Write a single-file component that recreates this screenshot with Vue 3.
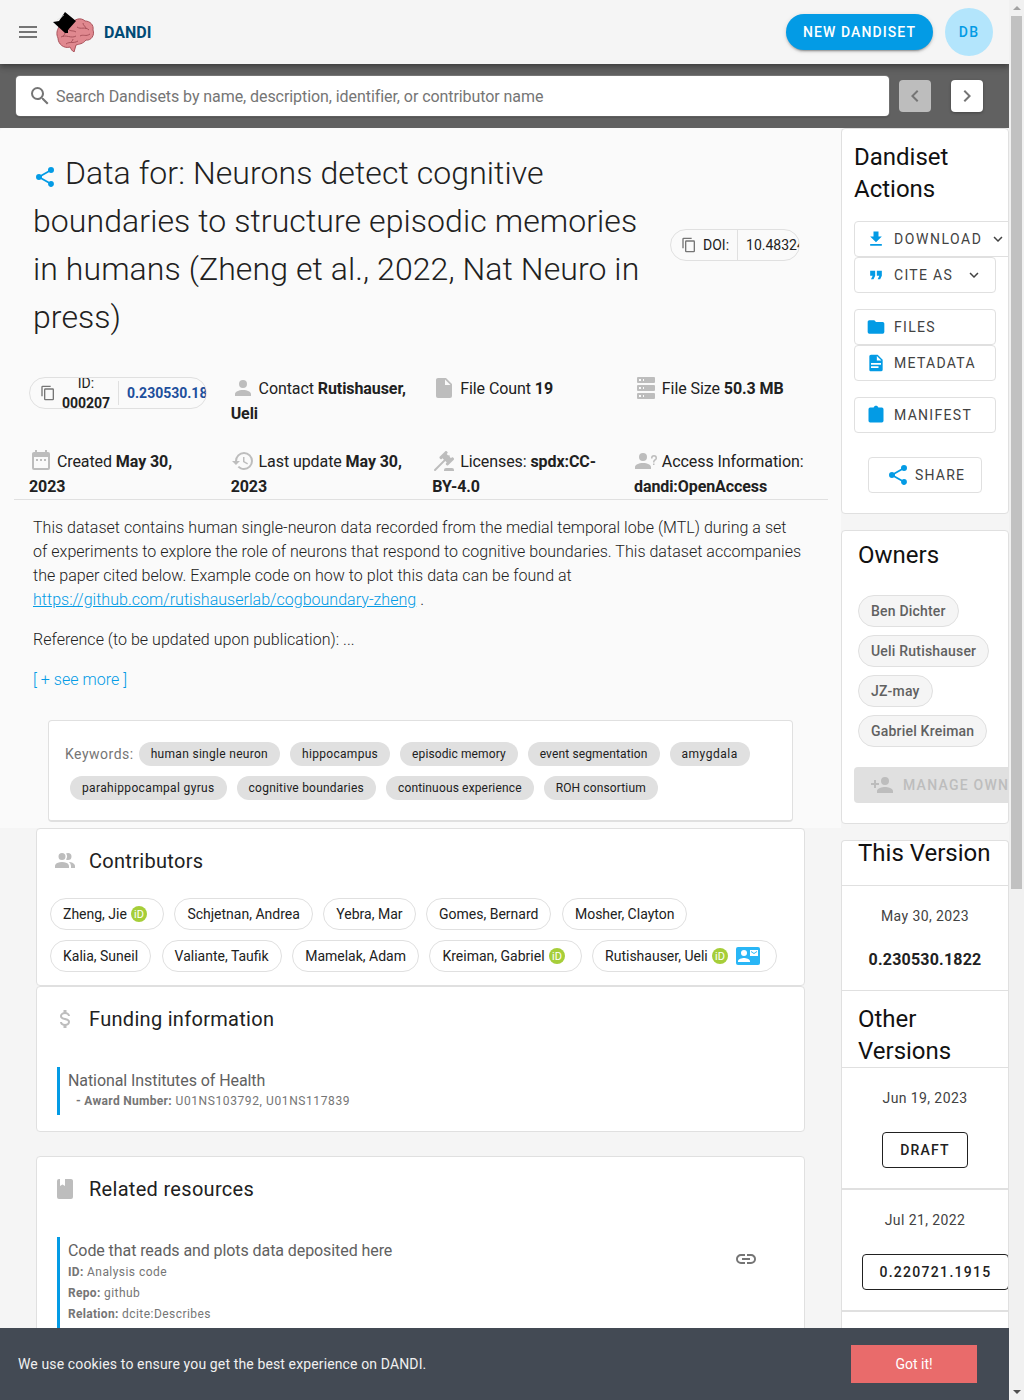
<script setup>
const icons = {
  menu: 'M3,6H21V8H3V6M3,11H21V13H3V11M3,16H21V18H3V16Z',
  magnify: 'M9.5,3A6.5,6.5 0 0,1 16,9.5C16,11.11 15.41,12.59 14.44,13.73L14.71,14H15.5L20.5,19L19,20.5L14,15.5V14.71L13.73,14.44C12.59,15.41 11.11,16 9.5,16A6.5,6.5 0 0,1 3,9.5A6.5,6.5 0 0,1 9.5,3M9.5,5C7,5 5,7 5,9.5C5,12 7,14 9.5,14C12,14 14,12 14,9.5C14,7 12,5 9.5,5Z',
  left: 'M15.41,16.58L10.83,12L15.41,7.41L14,6L8,12L14,18L15.41,16.58Z',
  right: 'M8.59,16.58L13.17,12L8.59,7.41L10,6L16,12L10,18L8.59,16.58Z',
  down: 'M7.41,8.58L12,13.17L16.59,8.58L18,10L12,16L6,10L7.41,8.58Z',
  share: 'M18,16.08C17.24,16.08 16.56,16.38 16.04,16.85L8.91,12.7C8.96,12.47 9,12.24 9,12C9,11.76 8.96,11.53 8.91,11.3L15.96,7.19C16.5,7.69 17.21,8 18,8A3,3 0 0,0 21,5A3,3 0 0,0 18,2A3,3 0 0,0 15,5C15,5.24 15.04,5.47 15.09,5.7L8.04,9.81C7.5,9.31 6.79,9 6,9A3,3 0 0,0 3,12A3,3 0 0,0 6,15C6.79,15 7.5,14.69 8.04,14.19L15.16,18.34C15.11,18.55 15.08,18.77 15.08,19C15.08,20.61 16.39,21.91 18,21.91C19.61,21.91 20.92,20.61 20.92,19A2.92,2.92 0 0,0 18,16.08Z',
  copy: 'M19,21H8V7H19M19,5H8A2,2 0 0,0 6,7V21A2,2 0 0,0 8,23H19A2,2 0 0,0 21,21V7A2,2 0 0,0 19,5M16,1H4A2,2 0 0,0 2,3V17H4V3H16V1Z',
  account: 'M12,4A4,4 0 0,1 16,8A4,4 0 0,1 12,12A4,4 0 0,1 8,8A4,4 0 0,1 12,4M12,14C16.42,14 20,15.79 20,18V20H4V18C4,15.79 7.58,14 12,14Z',
  file: 'M13,9V3.5L18.5,9M6,2C4.89,2 4,2.89 4,4V20A2,2 0 0,0 6,22H18A2,2 0 0,0 20,20V8L14,2H6Z',
  server: 'M4,1H20A1,1 0 0,1 21,2V6A1,1 0 0,1 20,7H4A1,1 0 0,1 3,6V2A1,1 0 0,1 4,1M4,9H20A1,1 0 0,1 21,10V14A1,1 0 0,1 20,15H4A1,1 0 0,1 3,14V10A1,1 0 0,1 4,9M4,17H20A1,1 0 0,1 21,18V22A1,1 0 0,1 20,23H4A1,1 0 0,1 3,22V18A1,1 0 0,1 4,17M9,5H10V3H9V5M9,13H10V11H9V13M9,21H10V19H9V21M5,3V5H7V3H5M5,11V13H7V11H5M5,19V21H7V19H5Z',
  calendar: 'M9,10H7V12H9V10M13,10H11V12H13V10M17,10H15V12H17V10M19,3H18V1H16V3H8V1H6V3H5C3.89,3 3,3.9 3,5V19A2,2 0 0,0 5,21H19A2,2 0 0,0 21,19V5A2,2 0 0,0 19,3M19,19H5V8H19V19Z',
  history: 'M13.5,8H12V13L16.28,15.54L17,14.33L13.5,12.25V8M13,3A9,9 0 0,0 4,12H1L4.96,16.03L9,12H6A7,7 0 0,1 13,5A7,7 0 0,1 20,12A7,7 0 0,1 13,19C11.07,19 9.32,18.21 8.06,16.94L6.64,18.36C8.27,20 10.5,21 13,21A9,9 0 0,0 22,12A9,9 0 0,0 13,3',
  gavel: 'M2.3,20.28L11.9,10.68L10.5,9.26L9.78,9.97C9.39,10.36 8.76,10.36 8.37,9.97L7.66,9.26C7.27,8.87 7.27,8.24 7.66,7.85L13.32,2.19C13.71,1.8 14.34,1.8 14.73,2.19L15.44,2.9C15.83,3.29 15.83,3.92 15.44,4.31L14.73,5L16.15,6.43C16.54,6.04 17.17,6.04 17.56,6.43C17.95,6.82 17.95,7.46 17.56,7.85L18.97,9.26L19.68,8.55C20.07,8.16 20.71,8.16 21.1,8.55L21.8,9.26C22.19,9.65 22.19,10.29 21.8,10.68L16.15,16.33C15.76,16.72 15.12,16.72 14.73,16.33L14.03,15.63C13.63,15.24 13.63,14.6 14.03,14.21L14.73,13.5L13.32,12.09L3.71,21.7C3.32,22.09 2.69,22.09 2.3,21.7C1.91,21.31 1.91,20.67 2.3,20.28M20,19A2,2 0 0,1 22,21V22H12V21A2,2 0 0,1 14,19H20Z',
  accountQ: 'M13,8A4,4 0 0,1 9,12A4,4 0 0,1 5,8A4,4 0 0,1 9,4A4,4 0 0,1 13,8M17,18V20H1V18C1,15.79 4.58,14 9,14C13.42,14 17,15.79 17,18M20.5,14.5V16H19V14.5H20.5M18.5,9.5H17V9A3,3 0 0,1 20,6A3,3 0 0,1 23,9C23,9.97 22.5,10.88 21.71,11.41L21.41,11.6C20.84,12 20.5,12.61 20.5,13.3V13.5H19V13.3C19,12.11 19.6,11 20.59,10.35L20.88,10.16C21.27,9.9 21.5,9.47 21.5,9A1.5,1.5 0 0,0 20,7.5A1.5,1.5 0 0,0 18.5,9V9.5Z',
  download: 'M5,20H19V18H5M19,9H15V3H9V9H5L12,16L19,9Z',
  quote: 'M14,17H17L19,13V7H13V13H16M6,17H9L11,13V7H5V13H8L6,17Z',
  folder: 'M10,4H4C2.89,4 2,4.89 2,6V18A2,2 0 0,0 4,20H20A2,2 0 0,0 22,18V8C22,6.89 21.1,6 20,6H12L10,4Z',
  doc: 'M13,9H18.5L13,3.5V9M6,2H14L20,8V20A2,2 0 0,1 18,22H6C4.89,22 4,21.1 4,20V4C4,2.89 4.89,2 6,2M15,18V16H6V18H15M18,14V12H6V14H18Z',
  clipboard: 'M19,3H14.82C14.4,1.84 13.3,1 12,1C10.7,1 9.6,1.84 9.18,3H5A2,2 0 0,0 3,5V19A2,2 0 0,0 5,21H19A2,2 0 0,0 21,19V5A2,2 0 0,0 19,3Z',
  accountPlus: 'M15,14C12.33,14 7,15.33 7,18V20H23V18C23,15.33 17.67,14 15,14M6,10V7H4V10H1V12H4V15H6V12H9V10M15,12A4,4 0 0,0 19,8A4,4 0 0,0 15,4A4,4 0 0,0 11,8A4,4 0 0,0 15,12Z',
  people: 'M16 17V19H2V17S2 13 9 13 16 17 16 17M12.5 7.5A3.5 3.5 0 1 0 9 11A3.5 3.5 0 0 0 12.5 7.5M15.94 13A5.32 5.32 0 0 1 18 17V19H22V17S22 13.37 15.94 13M15 4A3.39 3.39 0 0 0 13.07 4.59A5 5 0 0 1 13.07 10.41A3.39 3.39 0 0 0 15 11A3.5 3.5 0 0 0 15 4Z',
  dollar: 'M7,15H9C9,16.08 10.37,17 12,17C13.63,17 15,16.08 15,15C15,13.9 13.96,13.5 11.76,12.97C9.64,12.44 7,11.78 7,9C7,7.21 8.47,5.69 10.5,5.18V3H13.5V5.18C15.53,5.69 17,7.21 17,9H15C15,7.92 13.63,7 12,7C10.37,7 9,7.92 9,9C9,10.1 10.04,10.5 12.24,11.03C14.36,11.56 17,12.22 17,15C17,16.79 15.53,18.31 13.5,18.82V21H10.5V18.82C8.47,18.31 7,16.79 7,15Z',
  book: 'M18,22A2,2 0 0,0 20,20V4C20,2.89 19.1,2 18,2H12V9L9.5,7.5L7,9V2H6A2,2 0 0,0 4,4V20A2,2 0 0,0 6,22H18Z',
  link: 'M3.9,12C3.9,10.29 5.29,8.9 7,8.9H11V7H7A5,5 0 0,0 2,12A5,5 0 0,0 7,17H11V15.1H7C5.29,15.1 3.9,13.71 3.9,12M8,13H16V11H8V13M17,7H13V8.9H17C18.71,8.9 20.1,10.29 20.1,12C20.1,13.71 18.71,15.1 17,15.1H13V17H17A5,5 0 0,0 22,12A5,5 0 0,0 17,7Z'
}

const meta = [
  { icon: 'account', label: 'Contact', value: 'Rutishauser, Ueli' },
  { icon: 'file', label: 'File Count', value: '19' },
  { icon: 'server', label: 'File Size', value: '50.3 MB' },
  { icon: 'calendar', label: 'Created', value: 'May 30, 2023' },
  { icon: 'history', label: 'Last update', value: 'May 30, 2023' },
  { icon: 'gavel', label: 'Licenses:', value: 'spdx:CC-BY-4.0' },
  { icon: 'accountQ', label: 'Access Information:', value: 'dandi:OpenAccess' }
]

// tracking per keyword, the chips in the page don't share one even width
const keywords = [
  { text: 'human single neuron', spacing: 0.3 },
  { text: 'hippocampus', spacing: 0.3 },
  { text: 'episodic memory', spacing: 0.1 },
  { text: 'event segmentation', spacing: 0.13 },
  { text: 'amygdala', spacing: 0.5 },
  { text: 'parahippocampal gyrus', spacing: 0.35 },
  { text: 'cognitive boundaries', spacing: 0.22 },
  { text: 'continuous experience', spacing: 0.15 },
  { text: 'ROH consortium', spacing: 0.13 }
]

const contributors = [
  { name: 'Zheng, Jie', orcid: true },
  { name: 'Schjetnan, Andrea' },
  { name: 'Yebra, Mar' },
  { name: 'Gomes, Bernard' },
  { name: 'Mosher, Clayton' },
  { name: 'Kalia, Suneil' },
  { name: 'Valiante, Taufik' },
  { name: 'Mamelak, Adam' },
  { name: 'Kreiman, Gabriel', orcid: true },
  { name: 'Rutishauser, Ueli', orcid: true, contact: true }
]

const owners = ['Ben Dichter', 'Ueli Rutishauser', 'JZ-may', 'Gabriel Kreiman']
</script>

<template>
  <div class="app">
    <div class="page">
      <header class="topbar">
        <svg class="ic menu-ic" viewBox="0 0 24 24"><path :d="icons.menu" /></svg>
        <svg class="logo" viewBox="0 0 42 40">
          <path d="M6 15C8 11 14 14 18 12C21 7 28 5 32 9C37 9 41 13 40 18C42 23 38 29 33 28C30 32 26 32 23 33L21 40C19 39 18 37 17 35C11 37 5 32 5 26C3 22 4 18 6 15Z" fill="#e0888f" stroke="#a9525b" stroke-width="1" />
          <path d="M8 25C13 22 18 27 23 24M13 32C17 29 20 32 25 29M24 15C28 18 32 14 36 18M27 24C30 22 33 25 37 22M15 17C18 20 20 18 23 20M30 11C30 14 33 14 33 17M12 21C12 23 10 23 10 25M20 27C20 29 18 29 18 31" fill="none" stroke="#a9525b" stroke-width="1" />
          <path d="M0 10L6 9L12 0L23 9L15 18L15 21L12 21Z" fill="#000" />
          <path d="M4 8C7 6 9 5 11 3" fill="none" stroke="#ddd" stroke-width="0.6" />
        </svg>
        <span class="brand">DANDI</span>
        <span class="spacer"></span>
        <span class="new-btn">NEW DANDISET</span>
        <span class="avatar">DB</span>
      </header>

      <div class="searchbar">
        <div class="search-input">
          <svg class="ic search-ic" viewBox="0 0 24 24"><path :d="icons.magnify" /></svg>
          <span>Search Dandisets by name, description, identifier, or contributor name</span>
        </div>
        <span class="pager off"><svg class="ic" viewBox="0 0 24 24"><path :d="icons.left" /></svg></span>
        <span class="pager"><svg class="ic" viewBox="0 0 24 24"><path :d="icons.right" /></svg></span>
      </div>

      <main class="main">
        <div class="left">
          <section class="overview">
            <div class="title-row">
              <h1 class="title">
                <svg class="ic title-ic" viewBox="0 0 24 24"><path :d="icons.share" /></svg>
                Data for: Neurons detect cognitive boundaries to structure episodic memories in humans (Zheng et al., 2022, Nat Neuro in press)
              </h1>
              <div class="id-chip doi-chip">
                <svg class="ic copy-ic" viewBox="0 0 24 24"><path :d="icons.copy" /></svg>
                <span class="doi-label">DOI:</span>
                <span class="doi-value">10.48324/dandi.000207/0.230530.1822</span>
              </div>
            </div>

            <div class="meta-grid">
              <div class="id-chip">
                <svg class="ic copy-ic" viewBox="0 0 24 24"><path :d="icons.copy" /></svg>
                <span class="id-label">ID: <b>000207</b></span>
                <span class="id-version">0.230530.1822</span>
              </div>
              <div v-for="m in meta" :key="m.label" class="meta-cell">
                <svg class="ic meta-ic" viewBox="0 0 24 24"><path :d="icons[m.icon]" /></svg>
                {{ m.label }} <b>{{ m.value }}</b>
              </div>
            </div>

            <div class="description">
              <p>
                This dataset contains human single-neuron data recorded from the medial temporal lobe (MTL) during a set of experiments to explore the role of neurons that respond to cognitive boundaries. This dataset accompanies the paper cited below. Example code on how to plot this data can be found at
                <a class="underlined">https://github.com/rutishauserlab/cogboundary-zheng</a> .
              </p>
              <p>Reference (to be updated upon publication): ...</p>
              <p><a>[ + see more ]</a></p>
            </div>

            <div class="keywords">
              <span class="kw-label">Keywords:</span>
              <span
                v-for="k in keywords"
                :key="k.text"
                class="kw-chip"
                :style="{ letterSpacing: k.spacing + 'px' }"
              >{{ k.text }}</span>
            </div>
          </section>

          <section class="card contributors">
            <div class="card-head">
              <svg class="ic head-ic" viewBox="0 0 24 24"><path :d="icons.people" /></svg>
              <span>Contributors</span>
            </div>
            <div class="people">
              <span v-for="c in contributors" :key="c.name" class="person">
                {{ c.name }}
                <svg v-if="c.orcid" class="orcid" viewBox="0 0 16 16">
                  <circle cx="8" cy="8" r="8" fill="#a6ce39" />
                  <text x="8" y="12" text-anchor="middle" font-size="11" fill="#fff">iD</text>
                </svg>
                <svg v-if="c.contact" class="contact" viewBox="0 3 24 18"><rect y="3" width="24" height="18" rx="2" fill="#29b6f6" /><path d="M14 6H22V12H14Z" fill="#fff" /><path d="M21,8V7L18,9L15,7V8L18,10Z" fill="#29b6f6" /><path d="M8,6A3,3 0 0,1 11,9A3,3 0 0,1 8,12A3,3 0 0,1 5,9A3,3 0 0,1 8,6M14,18H2V17C2,15 6,13.9 8,13.9C10,13.9 14,15 14,17Z" fill="#fff" /></svg>
              </span>
            </div>
          </section>

          <section class="card funding">
            <div class="card-head">
              <svg class="ic head-ic" viewBox="0 0 24 24"><path :d="icons.dollar" /></svg>
              <span>Funding information</span>
            </div>
            <div class="entry">
              <div class="entry-title">National Institutes of Health</div>
              <div class="entry-line award"><b>- Award Number:</b> U01NS103792, U01NS117839</div>
            </div>
          </section>

          <section class="card related">
            <div class="card-head">
              <svg class="ic head-ic" viewBox="0 0 24 24"><path :d="icons.book" /></svg>
              <span>Related resources</span>
            </div>
            <div class="entry entry-link">
              <div>
                <div class="entry-title">Code that reads and plots data deposited here</div>
                <div class="entry-line"><b>ID:</b> Analysis code</div>
                <div class="entry-line"><b>Repo:</b> github</div>
                <div class="entry-line"><b>Relation:</b> dcite:Describes</div>
                <div class="entry-line"><b>URL:</b> github</div>
              </div>
              <svg class="ic link-ic" viewBox="0 0 24 24"><path :d="icons.link" /></svg>
            </div>
          </section>
        </div>

        <aside class="side">
          <section class="panel actions">
            <h2 class="side-title">Dandiset Actions</h2>
            <div class="btn-group">
              <span class="act-btn wide"><svg class="ic act-ic" viewBox="0 0 24 24"><path :d="icons.download" /></svg>DOWNLOAD<svg class="ic caret" viewBox="0 0 24 24"><path :d="icons.down" /></svg></span>
              <span class="act-btn"><svg class="ic act-ic" viewBox="0 0 24 24"><path :d="icons.quote" /></svg>CITE AS<svg class="ic caret" viewBox="0 0 24 24"><path :d="icons.down" /></svg></span>
            </div>
            <div class="btn-group">
              <span class="act-btn"><svg class="ic act-ic" viewBox="0 0 24 24"><path :d="icons.folder" /></svg>FILES</span>
              <span class="act-btn"><svg class="ic act-ic" viewBox="0 0 24 24"><path :d="icons.doc" /></svg>METADATA</span>
            </div>
            <div class="btn-group">
              <span class="act-btn"><svg class="ic act-ic" viewBox="0 0 24 24"><path :d="icons.clipboard" /></svg>MANIFEST</span>
            </div>
            <span class="act-btn share"><svg class="ic share-ic" viewBox="0 0 24 24"><path :d="icons.share" /></svg>SHARE</span>
          </section>

          <section class="panel owners">
            <h2 class="side-title">Owners</h2>
            <div class="owner-list">
              <span v-for="o in owners" :key="o" class="owner">{{ o }}</span>
            </div>
            <span class="manage"><svg class="ic manage-ic" viewBox="0 0 24 24"><path :d="icons.accountPlus" /></svg>MANAGE OWNERS</span>
          </section>

          <section class="panel versions">
            <h2 class="side-title this-title">This Version</h2>
            <div class="version current">
              <div class="v-date">May 30, 2023</div>
              <div class="v-current">0.230530.1822</div>
            </div>
            <h2 class="side-title other-title">Other Versions</h2>
            <div class="version draft">
              <div class="v-date">Jun 19, 2023</div>
              <span class="v-btn">DRAFT</span>
            </div>
            <div class="version older">
              <div class="v-date">Jul 21, 2022</div>
              <span class="v-btn long">0.220721.1915</span>
            </div>
          </section>
        </aside>
      </main>

      <div class="cookie">
        <span>We use cookies to ensure you get the best experience on DANDI.</span>
        <span class="got-it">Got it!</span>
      </div>
    </div>

    <div class="scrollbar">
      <span class="arrow up"></span>
      <span class="thumb"></span>
      <span class="arrow dn"></span>
    </div>
  </div>
</template>

<style scoped>
.app {
  display: flex;
  width: 1024px;
  height: 1400px;
  overflow: hidden;
  font-family: Roboto, "Liberation Sans", sans-serif;
  font-size: 16px;
  color: #212121;
  background: #f5f5f5;
}

.page {
  position: relative;
  width: 1009px;
  height: 1400px;
  overflow: hidden;
  flex: none;
}

.ic {
  display: block;
  width: 24px;
  height: 24px;
  fill: currentColor;
  flex: none;
}

.topbar {
  position: relative;
  z-index: 2;
  display: flex;
  align-items: center;
  height: 64px;
  padding: 0 16px;
  box-sizing: border-box;
  background: #f5f5f5;
  box-shadow: 0 2px 4px -1px rgba(0, 0, 0, .2), 0 4px 5px rgba(0, 0, 0, .14), 0 1px 10px rgba(0, 0, 0, .12);
}

.menu-ic { color: #757575; }

.logo {
  width: 42px;
  height: 40px;
  margin-left: 13px;
  flex: none;
}

.brand {
  margin-left: 9px;
  font-weight: 700;
  color: #004a75;
}

.spacer { flex: 1; }

.new-btn {
  display: flex;
  align-items: center;
  justify-content: center;
  width: 147px;
  height: 36px;
  border-radius: 18px;
  background: #039be5;
  color: #fff;
  font-size: 14px;
  font-weight: 500;
  letter-spacing: 1.1px;
  box-shadow: 0 3px 1px -2px rgba(0, 0, 0, .2), 0 2px 2px rgba(0, 0, 0, .14), 0 1px 5px rgba(0, 0, 0, .12);
}

.avatar {
  display: flex;
  align-items: center;
  justify-content: center;
  width: 48px;
  height: 48px;
  margin-left: 12px;
  border-radius: 50%;
  background: #b3e5fc;
  color: #039be5;
  font-size: 14px;
  font-weight: 500;
  letter-spacing: 1.25px;
}

.searchbar {
  display: flex;
  align-items: center;
  height: 64px;
  padding-left: 16px;
  box-sizing: border-box;
  background: #616161;
}

.search-input {
  display: flex;
  align-items: center;
  gap: 4px;
  width: 873px;
  height: 40px;
  padding-left: 12px;
  box-sizing: border-box;
  background: #fff;
  border-radius: 4px;
  color: #757575;
  letter-spacing: -.07px;
  box-shadow: 0 0 0 1px rgba(255, 255, 255, .15), 0 1px 2px rgba(0, 0, 0, .4);
}

.pager {
  display: flex;
  align-items: center;
  justify-content: center;
  width: 32px;
  height: 32px;
  margin-left: 10px;
  border-radius: 4px;
  background: #fff;
  color: #757575;
  box-shadow: 0 1px 3px rgba(0, 0, 0, .3);
}

.pager + .pager { margin-left: 20px; }
.pager.off { background: #bdbdbd; box-shadow: none; }

.main {
  display: flex;
  align-items: flex-start;
}

.left {
  width: 841px;
  flex: none;
}

.overview {
  height: 700px;
  padding-top: 21px;
  box-sizing: border-box;
  background: #fafafa;
  border-radius: 4px 4px 0 0;
}

.title-row {
  display: flex;
  align-items: center;
  padding-left: 33px;
}

.title {
  width: 625px;
  margin: 0 12px 0 0;
  flex: none;
  font-size: 32px;
  font-weight: 300;
  line-height: 48px;
  letter-spacing: .08px;
  color: #212121;
}

.title-ic {
  display: inline-block;
  color: #039be5;
  vertical-align: -5px;
}

.id-chip {
  display: flex;
  align-items: center;
  width: 178px;
  height: 32px;
  box-sizing: border-box;
  border: 1px solid #e0e0e0;
  border-radius: 16px;
  overflow: hidden;
  font-size: 14px;
  line-height: 20px;
  white-space: nowrap;
  flex: none;
}

.meta-grid .id-chip { margin-top: 1px; }

.doi-chip {
  width: 130px;
  color: #212121;
}

.copy-ic {
  width: 16px;
  height: 16px;
  margin-left: 10px;
  color: #757575;
}

.doi-label {
  margin-left: 6px;
  padding-right: 8px;
  height: 100%;
  line-height: 30px;
  border-right: 1px solid #e0e0e0;
}

.doi-value { margin-left: 8px; }

.id-label {
  width: 62px;
  margin: 0 1px 0 -1px;
  white-space: normal;
  text-align: center;
  flex: none;
}

.id-version {
  padding-left: 8px;
  height: 24px;
  line-height: 24px;
  border-left: 1px solid #e0e0e0;
  color: #1e4f9c;
  font-weight: 700;
}

.meta-grid {
  display: grid;
  grid-template-columns: repeat(4, 201.67px);
  row-gap: 23px;
  width: 814px;
  height: 124px;
  box-sizing: border-box;
  margin: 35px 0 0 14px;
  padding-left: 15px;
  border-bottom: 1px solid #e0e0e0;
}

.meta-cell {
  width: 178px;
  line-height: 25px;
  letter-spacing: -.08px;
  color: #212121;
}

.meta-cell b { font-weight: 700; }

.meta-ic {
  display: inline-block;
  color: #bdbdbd;
  vertical-align: middle;
  margin-top: -4px;
}

.description {
  width: 770px;
  margin: 16px 0 0 33px;
  font-weight: 300;
  line-height: 24px;
  letter-spacing: .03px;
  color: #212121;
}

.description p { margin: 0 0 16px; }
.description a { color: #039be5; }
.description .underlined { text-decoration: underline; }

.keywords {
  display: flex;
  flex-wrap: wrap;
  align-items: center;
  align-content: flex-start;
  gap: 10px 0;
  width: 745px;
  height: 102px;
  margin: 28px 0 0 48px;
  padding: 21px 16px 0;
  box-sizing: border-box;
  background: #fff;
  border: 1px solid #e0e0e0;
  border-bottom-width: 2px;
  border-radius: 4px;
}

.kw-label {
  font-size: 14px;
  letter-spacing: .5px;
  color: #757575;
}

.kw-chip {
  display: flex;
  align-items: center;
  height: 24px;
  margin: 0 5px;
  padding: 0 12px;
  border-radius: 12px;
  background: #e0e0e0;
  font-size: 12px;
  color: #212121;
}

.card {
  width: 769px;
  margin-left: 36px;
  box-sizing: border-box;
  background: #fff;
  border: 1px solid #e0e0e0;
  border-radius: 4px;
}

.card-head {
  display: flex;
  align-items: center;
  height: 64px;
  padding-left: 16px;
  font-size: 20px;
  letter-spacing: .3px;
  color: #212121;
}

.head-ic {
  margin-right: 12px;
  color: #bdbdbd;
}

.contributors { height: 158px; }

.people {
  display: flex;
  flex-wrap: wrap;
  gap: 10px 10.5px;
  padding: 5px 13px 0;
}

.person {
  display: flex;
  align-items: center;
  gap: 4px;
  height: 32px;
  padding: 0 12px;
  box-sizing: border-box;
  border: 1px solid #e0e0e0;
  border-radius: 16px;
  font-size: 14px;
}

.orcid {
  width: 16px;
  height: 16px;
  margin-right: 4px;
  font-family: Roboto, sans-serif;
}

.contact {
  width: 24px;
  height: 18px;
  margin-right: 4px;
}

.funding { height: 146px; }

.entry {
  margin: 16px 0 0 20px;
  padding-left: 8px;
  border-left: 3px solid #039be5;
}

.entry-title {
  padding-top: 2px;
  margin-bottom: -3px;
  line-height: 24px;
  letter-spacing: -.08px;
  color: #616161;
}

.entry-line {
  margin-top: 3px;
  font-size: 12px;
  line-height: 18px;
  letter-spacing: .45px;
  color: #757575;
}

.entry-line b { font-weight: 700; letter-spacing: .3px; }

.award {
  margin-top: 2px;
  margin-left: 8px;
  padding-bottom: 5px;
  letter-spacing: .6px;
}

.related {
  height: 300px;
  margin-top: 24px;
}

.entry-link {
  display: flex;
  align-items: flex-start;
  justify-content: space-between;
  padding-right: 46px;
}

.link-ic {
  margin-top: 10px;
  color: #757575;
}

.side {
  width: 168px;
  flex: none;
}

.panel {
  box-sizing: border-box;
  background: #fff;
  border: 1px solid #e0e0e0;
  border-radius: 4px;
  overflow: hidden;
}

.side-title {
  margin: 0;
  font-size: 24px;
  font-weight: 400;
  line-height: 32px;
  color: #111;
}

.actions {
  height: 386px;
  padding: 12px 0 0 12px;
}

.btn-group {
  display: flex;
  flex-direction: column;
  margin-top: 16px;
}

.act-btn {
  display: flex;
  align-items: center;
  width: 142px;
  height: 36px;
  box-sizing: border-box;
  padding-left: 11px;
  border: 1px solid #e0e0e0;
  border-radius: 4px;
  background: #fff;
  font-size: 14px;
  letter-spacing: 1.3px;
  color: #424242;
  white-space: nowrap;
}

.act-btn.wide {
  width: 170px;
  letter-spacing: 1.55px;
}

.act-ic {
  width: 20px;
  height: 20px;
  margin-right: 8px;
  color: #039be5;
}

.caret {
  width: 18px;
  height: 18px;
  margin-left: 12px;
  color: #424242;
}

.act-btn.wide .caret { margin-left: 6px; }

.share {
  width: 114px;
  margin: 24px 0 0 14px;
  padding-left: 17px;
  letter-spacing: 1.2px;
}

.share-ic {
  width: 24px;
  height: 24px;
  margin-right: 5px;
  color: #039be5;
}

.owners {
  height: 294px;
  margin-top: 16px;
  padding: 8px 0 0 16px;
}

.owner-list {
  display: flex;
  flex-direction: column;
  align-items: flex-start;
  gap: 8px;
  margin-top: 24px;
}

.owner {
  display: flex;
  align-items: center;
  height: 32px;
  box-sizing: border-box;
  padding: 0 12px;
  border: 1px solid #e0e0e0;
  border-radius: 16px;
  background: #f5f5f5;
  font-size: 14px;
  font-weight: 500;
  letter-spacing: .2px;
  color: #616161;
}

.manage {
  display: flex;
  align-items: center;
  width: 190px;
  height: 36px;
  margin: 20px 0 0 -4px;
  padding-left: 16px;
  box-sizing: border-box;
  border-radius: 4px;
  background: #e0e0e0;
  color: #bdbdbd;
  font-size: 14px;
  font-weight: 500;
  letter-spacing: 1.25px;
  white-space: nowrap;
}

.manage-ic { margin-right: 9px; }

.versions {
  height: 600px;
  margin-top: 16px;
  border-bottom: 0;
}

.this-title {
  height: 44px;
  padding-left: 16px;
  line-height: 24px;
  border-bottom: 1px solid #e0e0e0;
}

.version {
  text-align: center;
  border-bottom: 1px solid #e0e0e0;
}

.v-date {
  font-size: 14px;
  letter-spacing: .4px;
  color: #424242;
}

.current {
  height: 105px;
  padding-top: 22px;
  box-sizing: border-box;
}

.v-current {
  margin-top: 26px;
  font-weight: 700;
  letter-spacing: .2px;
  color: #212121;
}

.other-title {
  height: 64px;
  padding: 12px 0 0 16px;
  border-bottom: 1px solid #e0e0e0;
}

.draft,
.older {
  height: 122px;
  padding-top: 22px;
  box-sizing: border-box;
  border-bottom-width: 2px;
}

.v-btn {
  display: flex;
  align-items: center;
  justify-content: center;
  width: 86px;
  height: 36px;
  box-sizing: border-box;
  margin: 26px 0 0 40px;
  border: 1px solid #212121;
  border-radius: 4px;
  font-size: 14px;
  font-weight: 500;
  letter-spacing: 1.2px;
  color: #212121;
}

.v-btn.long {
  width: 147px;
  margin-left: 20px;
  letter-spacing: 1.3px;
}

.cookie {
  position: absolute;
  left: 0;
  right: 0;
  bottom: 0;
  z-index: 3;
  display: flex;
  align-items: center;
  justify-content: space-between;
  height: 72px;
  padding: 0 32px 0 18px;
  box-sizing: border-box;
  background: #434a54;
  color: #f0f0f0;
  font-size: 14px;
  letter-spacing: .13px;
}

.got-it {
  display: flex;
  align-items: center;
  justify-content: center;
  width: 126px;
  height: 38px;
  background: #e96b6b;
  color: #fff;
  letter-spacing: 0;
}

.scrollbar {
  display: flex;
  flex-direction: column;
  align-items: center;
  justify-content: space-between;
  width: 15px;
  height: 1400px;
  flex: none;
  background: #f1f1f1;
}

.thumb {
  width: 11px;
  height: 873px;
  margin-bottom: auto;
  background: #c1c1c1;
}

.arrow {
  width: 0;
  height: 0;
  margin: 6px 0;
  border-left: 4px solid transparent;
  border-right: 4px solid transparent;
}

.arrow.up { border-bottom: 4px solid #a3a3a3; }
.arrow.dn { border-top: 4px solid #505050; }
</style>

<style>
body { margin: 0; }
</style>
